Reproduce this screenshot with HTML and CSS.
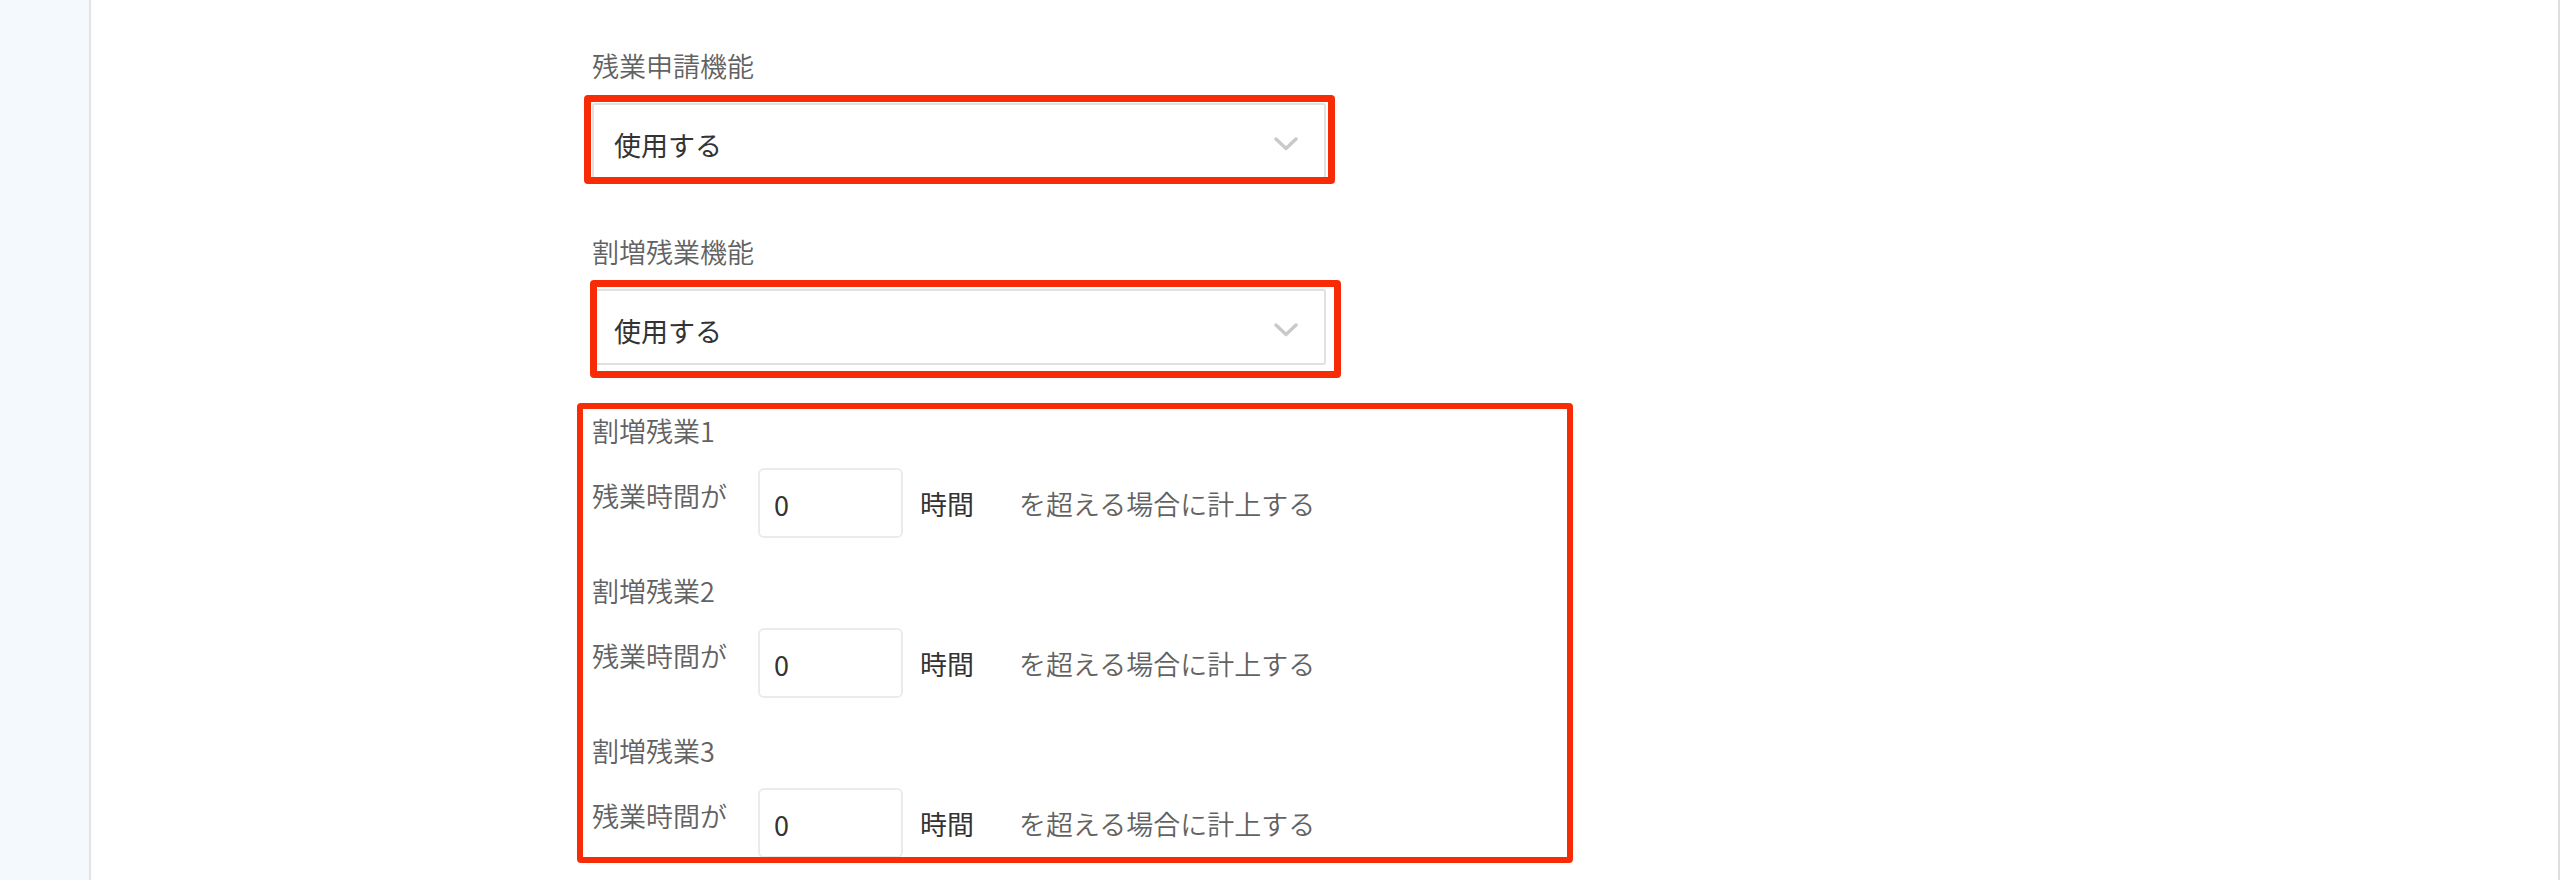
FILE: index.html
```html
<!DOCTYPE html>
<html lang="ja">
<head>
<meta charset="utf-8">
<title>残業設定</title>
<link rel="stylesheet" href="styles.css">
</head>
<body>
<div class="layout">
  <aside class="sidebar"></aside>
  <main class="main">
    <section class="field">
      <div class="field-label">残業申請機能</div>
      <div class="select">
        <span class="select-value">使用する</span>
        <svg class="chevron" width="24" height="14" viewBox="0 0 24 14"><polyline points="2,2 12,11.5 22,2" fill="none" stroke="#c9c9c9" stroke-width="3.4" stroke-linecap="round" stroke-linejoin="round"/></svg>
      </div>
    </section>
    <section class="field field-last">
      <div class="field-label">割増残業機能</div>
      <div class="select">
        <span class="select-value">使用する</span>
        <svg class="chevron" width="24" height="14" viewBox="0 0 24 14"><polyline points="2,2 12,11.5 22,2" fill="none" stroke="#c9c9c9" stroke-width="3.4" stroke-linecap="round" stroke-linejoin="round"/></svg>
      </div>
    </section>

    <section class="ot-group">
      <div class="field-label">割増残業1</div>
      <div class="ot-row">
        <span class="ot-prefix">残業時間が</span>
        <div class="num-input">0</div>
        <span class="ot-unit">時間</span>
        <span class="ot-suffix">を超える場合に計上する</span>
      </div>
    </section>
    <section class="ot-group">
      <div class="field-label">割増残業2</div>
      <div class="ot-row">
        <span class="ot-prefix">残業時間が</span>
        <div class="num-input">0</div>
        <span class="ot-unit">時間</span>
        <span class="ot-suffix">を超える場合に計上する</span>
      </div>
    </section>
    <section class="ot-group">
      <div class="field-label">割増残業3</div>
      <div class="ot-row">
        <span class="ot-prefix">残業時間が</span>
        <div class="num-input">0</div>
        <span class="ot-unit">時間</span>
        <span class="ot-suffix">を超える場合に計上する</span>
      </div>
    </section>

    <div class="mark mark-1"></div>
    <div class="mark mark-2"></div>
    <div class="mark mark-3"></div>
  </main>
</div>
</body>
</html>
```

FILE: styles.css
```css
html, body {
  margin: 0;
  padding: 0;
  height: 100%;
  overflow: hidden;
  background: #ffffff;
}

body {
  font-family: "Noto Sans CJK JP", "Noto Sans", sans-serif;
  color: #333333;
  font-weight: 350;
}

.layout {
  display: flex;
  height: 880px;
}

.sidebar {
  width: 89px;
  flex: 0 0 89px;
  background: #f4f9fe;
  border-right: 2px solid #e2e4e6;
}

.main {
  position: relative;
  flex: 1;
  padding: 45px 0 0 501px;
  border-right: 2px solid #dedede;
  box-sizing: border-box;
}

.field-label {
  font-size: 27px;
  line-height: 42px;
  color: #626262;
  margin-bottom: 16px;
}

.field {
  margin-bottom: 52px;
}

.field-last {
  margin-bottom: 45px;
}

.select {
  width: 734px;
  height: 76px;
  box-sizing: border-box;
  border: 2px solid #dfe1e2;
  border-radius: 3px;
  background: #ffffff;
  display: flex;
  align-items: center;
  justify-content: space-between;
  padding: 8px 26px 0 20px;
}

.select-value {
  font-size: 27px;
  line-height: 42px;
  color: #333333;
  font-weight: 400;
}

.chevron {
  display: block;
  margin-top: -2px;
}

.ot-group {
  margin-bottom: 32px;
}

.ot-group .field-label {
  margin-bottom: 16px;
}

.ot-row {
  display: flex;
  align-items: center;
  height: 70px;
}

.ot-prefix {
  align-self: flex-start;
  margin-top: 7px;
  width: 166px;
  font-size: 27px;
  line-height: 42px;
  color: #626262;
}

.num-input {
  width: 145px;
  height: 70px;
  box-sizing: border-box;
  border: 2px solid #ebebeb;
  border-radius: 6px;
  padding-left: 14px;
  padding-top: 2px;
  display: flex;
  align-items: center;
  font-size: 27px;
  font-weight: 400;
  color: #333333;
}

.ot-unit {
  margin-left: 17px;
  font-size: 27px;
  font-weight: 400;
  line-height: 42px;
  color: #333333;
  padding-top: 2px;
}

.ot-suffix {
  margin-left: 45px;
  font-size: 27px;
  line-height: 42px;
  color: #626262;
  padding-top: 2px;
}

/* red annotation rectangles drawn over the form */
.mark {
  position: absolute;
  box-sizing: border-box;
  border: 7px solid #f72c06;
  border-radius: 4px;
  pointer-events: none;
}

.mark-1 {
  left: 493px;
  top: 95px;
  width: 751px;
  height: 89px;
}

.mark-2 {
  left: 499px;
  top: 280px;
  width: 751px;
  height: 98px;
}

.mark-3 {
  left: 486px;
  top: 403px;
  width: 996px;
  height: 460px;
  border-width: 6px;
}
```
